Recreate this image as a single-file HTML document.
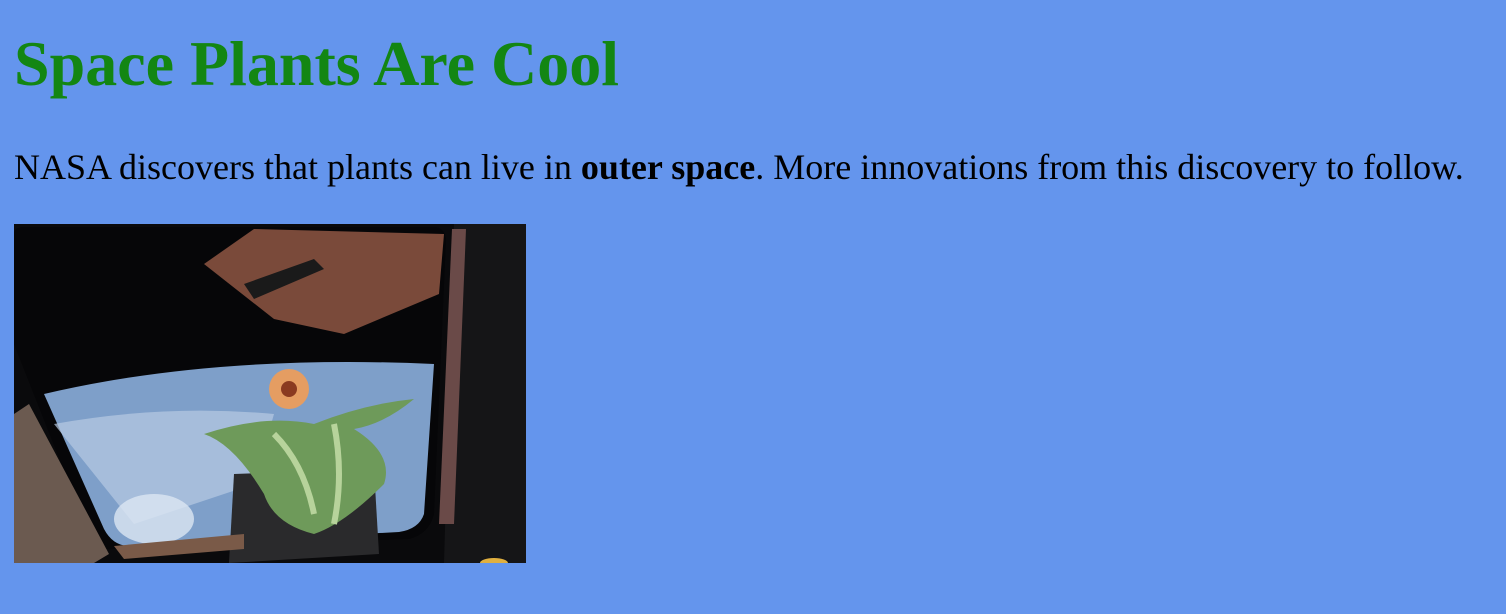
<!DOCTYPE html>
<html><head><meta charset="utf-8"><style>
html,body{margin:0;padding:0;background:#6495ED;width:1506px;height:614px;overflow:hidden}
h1{position:absolute;left:14px;top:24px;margin:0;font:bold 64px/80px "Liberation Serif",serif;color:#138613;white-space:nowrap}
p{position:absolute;left:14px;top:147px;margin:0;font:36px/40px "Liberation Serif",serif;color:#000;white-space:nowrap}
svg{position:absolute;left:14px;top:224px}
</style></head><body>
<h1>Space Plants Are Cool</h1>
<p>NASA discovers that plants can live in <b>outer space</b>. More innovations from this discovery to follow.</p>
<svg width="512" height="339" viewBox="0 0 512 339">
<rect width="512" height="339" fill="#0a0a0c"/>
<path d="M0 10 Q0 3 10 3 L420 3 Q430 3 432 15 L420 290 Q415 310 395 315 L100 325 Q80 327 75 310 L0 120 Z" fill="#060608"/>
<path d="M30 170 Q200 130 420 140 L410 290 Q405 305 385 308 L120 322 Q100 324 90 305 Z" fill="#7e9fc9"/>
<path d="M40 200 Q150 180 260 190 L240 260 L120 300 Z" fill="#b8cbe2" opacity=".7"/>
<ellipse cx="140" cy="295" rx="40" ry="25" fill="#dce6f2" opacity=".8"/>
<path d="M190 40 L240 5 L430 10 L425 70 L330 110 L260 95 Z" fill="#7a4a3a"/>
<path d="M230 60 L300 35 L310 45 L240 75 Z" fill="#1a1a1a"/>
<path d="M0 190 L15 180 L95 330 L80 339 L0 339 Z" fill="#6b5a50"/>
<path d="M440 0 L512 0 L512 339 L430 339 Z" fill="#151517"/>
<path d="M438 5 L452 5 L440 300 L425 300 Z" fill="#6a4a48"/>
<path d="M220 250 L360 245 L365 330 L215 339 Z" fill="#2a2a2c"/>
<path d="M190 210 Q250 190 300 200 Q350 180 400 175 Q370 200 340 205 Q380 230 370 260 Q330 300 300 310 Q260 300 250 270 Q220 220 190 210 Z" fill="#6e9a5a"/>
<path d="M260 210 Q290 240 300 290 M320 200 Q330 250 320 300" stroke="#b7d39b" stroke-width="6" fill="none"/>
<circle cx="275" cy="165" r="20" fill="#e59d62"/>
<circle cx="275" cy="165" r="8" fill="#8a3a20"/>
<path d="M100 322 L230 310 L230 325 L110 335 Z" fill="#7a5a48"/>
<ellipse cx="480" cy="339" rx="14" ry="5" fill="#e0b040"/>
</svg>
</body></html>
